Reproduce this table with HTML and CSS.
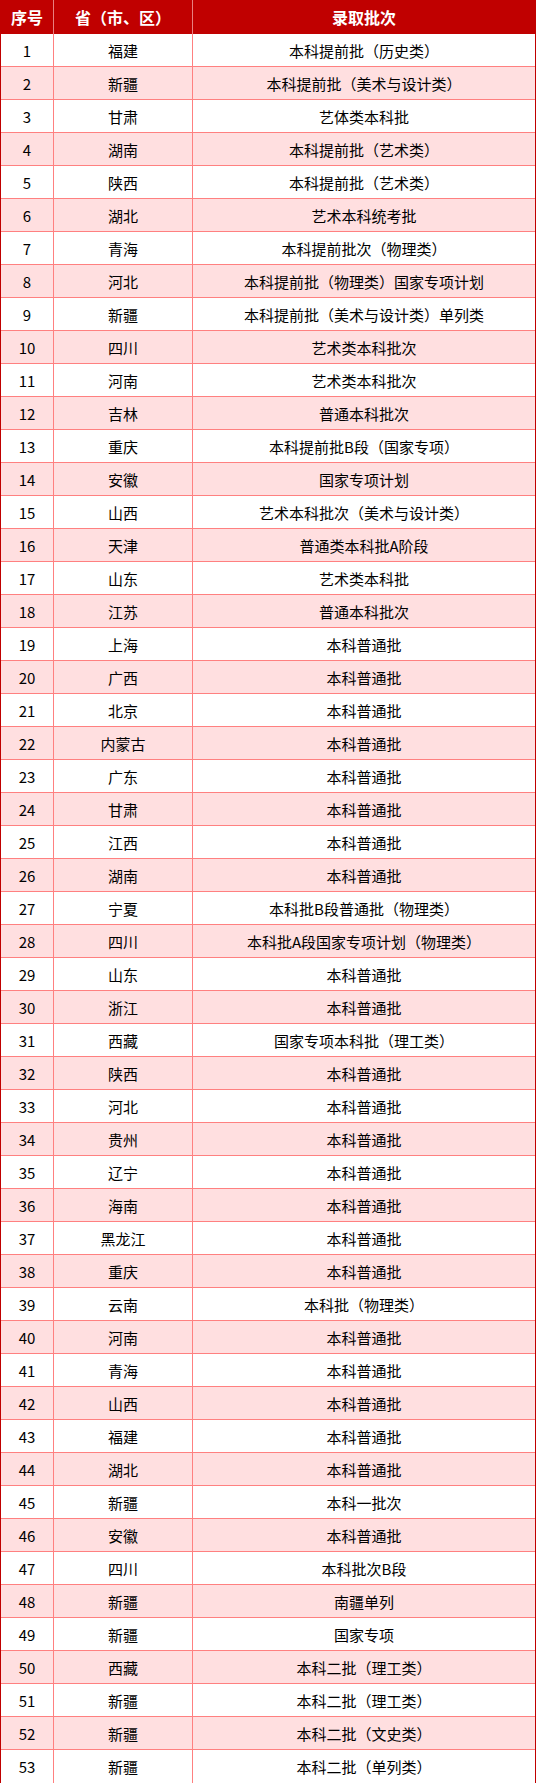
FILE: index.html
```html
<!DOCTYPE html>
<html lang="zh">
<head>
<meta charset="utf-8">
<title>录取批次</title>
<link rel="stylesheet" href="styles.css">
</head>
<body>
<div class="wrap">
<table class="tbl">
<colgroup><col class="c1"><col class="c2"><col class="c3"></colgroup>
<thead>
<tr><th>序号</th><th>省（市、区）</th><th>录取批次</th></tr>
</thead>
<tbody>
<tr><td>1</td><td>福建</td><td>本科提前批（历史类）</td></tr>
<tr><td>2</td><td>新疆</td><td>本科提前批（美术与设计类）</td></tr>
<tr><td>3</td><td>甘肃</td><td>艺体类本科批</td></tr>
<tr><td>4</td><td>湖南</td><td>本科提前批（艺术类）</td></tr>
<tr><td>5</td><td>陕西</td><td>本科提前批（艺术类）</td></tr>
<tr><td>6</td><td>湖北</td><td>艺术本科统考批</td></tr>
<tr><td>7</td><td>青海</td><td>本科提前批次（物理类）</td></tr>
<tr><td>8</td><td>河北</td><td>本科提前批（物理类）国家专项计划</td></tr>
<tr><td>9</td><td>新疆</td><td>本科提前批（美术与设计类）单列类</td></tr>
<tr><td>10</td><td>四川</td><td>艺术类本科批次</td></tr>
<tr><td>11</td><td>河南</td><td>艺术类本科批次</td></tr>
<tr><td>12</td><td>吉林</td><td>普通本科批次</td></tr>
<tr><td>13</td><td>重庆</td><td>本科提前批B段（国家专项）</td></tr>
<tr><td>14</td><td>安徽</td><td>国家专项计划</td></tr>
<tr><td>15</td><td>山西</td><td>艺术本科批次（美术与设计类）</td></tr>
<tr><td>16</td><td>天津</td><td>普通类本科批A阶段</td></tr>
<tr><td>17</td><td>山东</td><td>艺术类本科批</td></tr>
<tr><td>18</td><td>江苏</td><td>普通本科批次</td></tr>
<tr><td>19</td><td>上海</td><td>本科普通批</td></tr>
<tr><td>20</td><td>广西</td><td>本科普通批</td></tr>
<tr><td>21</td><td>北京</td><td>本科普通批</td></tr>
<tr><td>22</td><td>内蒙古</td><td>本科普通批</td></tr>
<tr><td>23</td><td>广东</td><td>本科普通批</td></tr>
<tr><td>24</td><td>甘肃</td><td>本科普通批</td></tr>
<tr><td>25</td><td>江西</td><td>本科普通批</td></tr>
<tr><td>26</td><td>湖南</td><td>本科普通批</td></tr>
<tr><td>27</td><td>宁夏</td><td>本科批B段普通批（物理类）</td></tr>
<tr><td>28</td><td>四川</td><td>本科批A段国家专项计划（物理类）</td></tr>
<tr><td>29</td><td>山东</td><td>本科普通批</td></tr>
<tr><td>30</td><td>浙江</td><td>本科普通批</td></tr>
<tr><td>31</td><td>西藏</td><td>国家专项本科批（理工类）</td></tr>
<tr><td>32</td><td>陕西</td><td>本科普通批</td></tr>
<tr><td>33</td><td>河北</td><td>本科普通批</td></tr>
<tr><td>34</td><td>贵州</td><td>本科普通批</td></tr>
<tr><td>35</td><td>辽宁</td><td>本科普通批</td></tr>
<tr><td>36</td><td>海南</td><td>本科普通批</td></tr>
<tr><td>37</td><td>黑龙江</td><td>本科普通批</td></tr>
<tr><td>38</td><td>重庆</td><td>本科普通批</td></tr>
<tr><td>39</td><td>云南</td><td>本科批（物理类）</td></tr>
<tr><td>40</td><td>河南</td><td>本科普通批</td></tr>
<tr><td>41</td><td>青海</td><td>本科普通批</td></tr>
<tr><td>42</td><td>山西</td><td>本科普通批</td></tr>
<tr><td>43</td><td>福建</td><td>本科普通批</td></tr>
<tr><td>44</td><td>湖北</td><td>本科普通批</td></tr>
<tr><td>45</td><td>新疆</td><td>本科一批次</td></tr>
<tr><td>46</td><td>安徽</td><td>本科普通批</td></tr>
<tr><td>47</td><td>四川</td><td>本科批次B段</td></tr>
<tr><td>48</td><td>新疆</td><td>南疆单列</td></tr>
<tr><td>49</td><td>新疆</td><td>国家专项</td></tr>
<tr><td>50</td><td>西藏</td><td>本科二批（理工类）</td></tr>
<tr><td>51</td><td>新疆</td><td>本科二批（理工类）</td></tr>
<tr><td>52</td><td>新疆</td><td>本科二批（文史类）</td></tr>
<tr><td>53</td><td>新疆</td><td>本科二批（单列类）</td></tr>
</tbody>
</table>
</div>
</body>
</html>
```
FILE: styles.css
```css
html, body {
  margin: 0;
  padding: 0;
  background: #ffffff;
}
.wrap {
  width: 534px;
  border-left: 1px solid #c00000;
  border-right: 1px solid #c00000;
  border-bottom: 1px solid #c00000;
}
.tbl {
  width: 534px;
  table-layout: fixed;
  border-collapse: separate;
  border-spacing: 0;
  font-family: "Noto Sans CJK SC", "Noto Sans", sans-serif;
}
.c1 { width: 53px; }
.c2 { width: 139px; }
.c3 { width: 342px; }
.tbl th {
  height: 34px;
  padding: 0;
  background: #c00000;
  color: #ffffff;
  font-size: 16px;
  font-weight: bold;
  text-align: center;
  vertical-align: middle;
  border-right: 1px solid #e88080;
  box-sizing: border-box;
  line-height: 1;
}
.tbl th:last-child { border-right: none; }
.tbl td {
  height: 33px;
  padding: 0;
  font-size: 15px;
  color: #000000;
  text-align: center;
  vertical-align: middle;
  border-right: 1px solid #ff8080;
  border-bottom: 1px solid #ff8080;
  box-sizing: border-box;
  line-height: 1;
}
.tbl td:last-child { border-right: none; }
.tbl tbody tr:last-child td { border-bottom: none; }
.tbl tbody tr:nth-child(even) td { background: #ffdfe0; }
```
